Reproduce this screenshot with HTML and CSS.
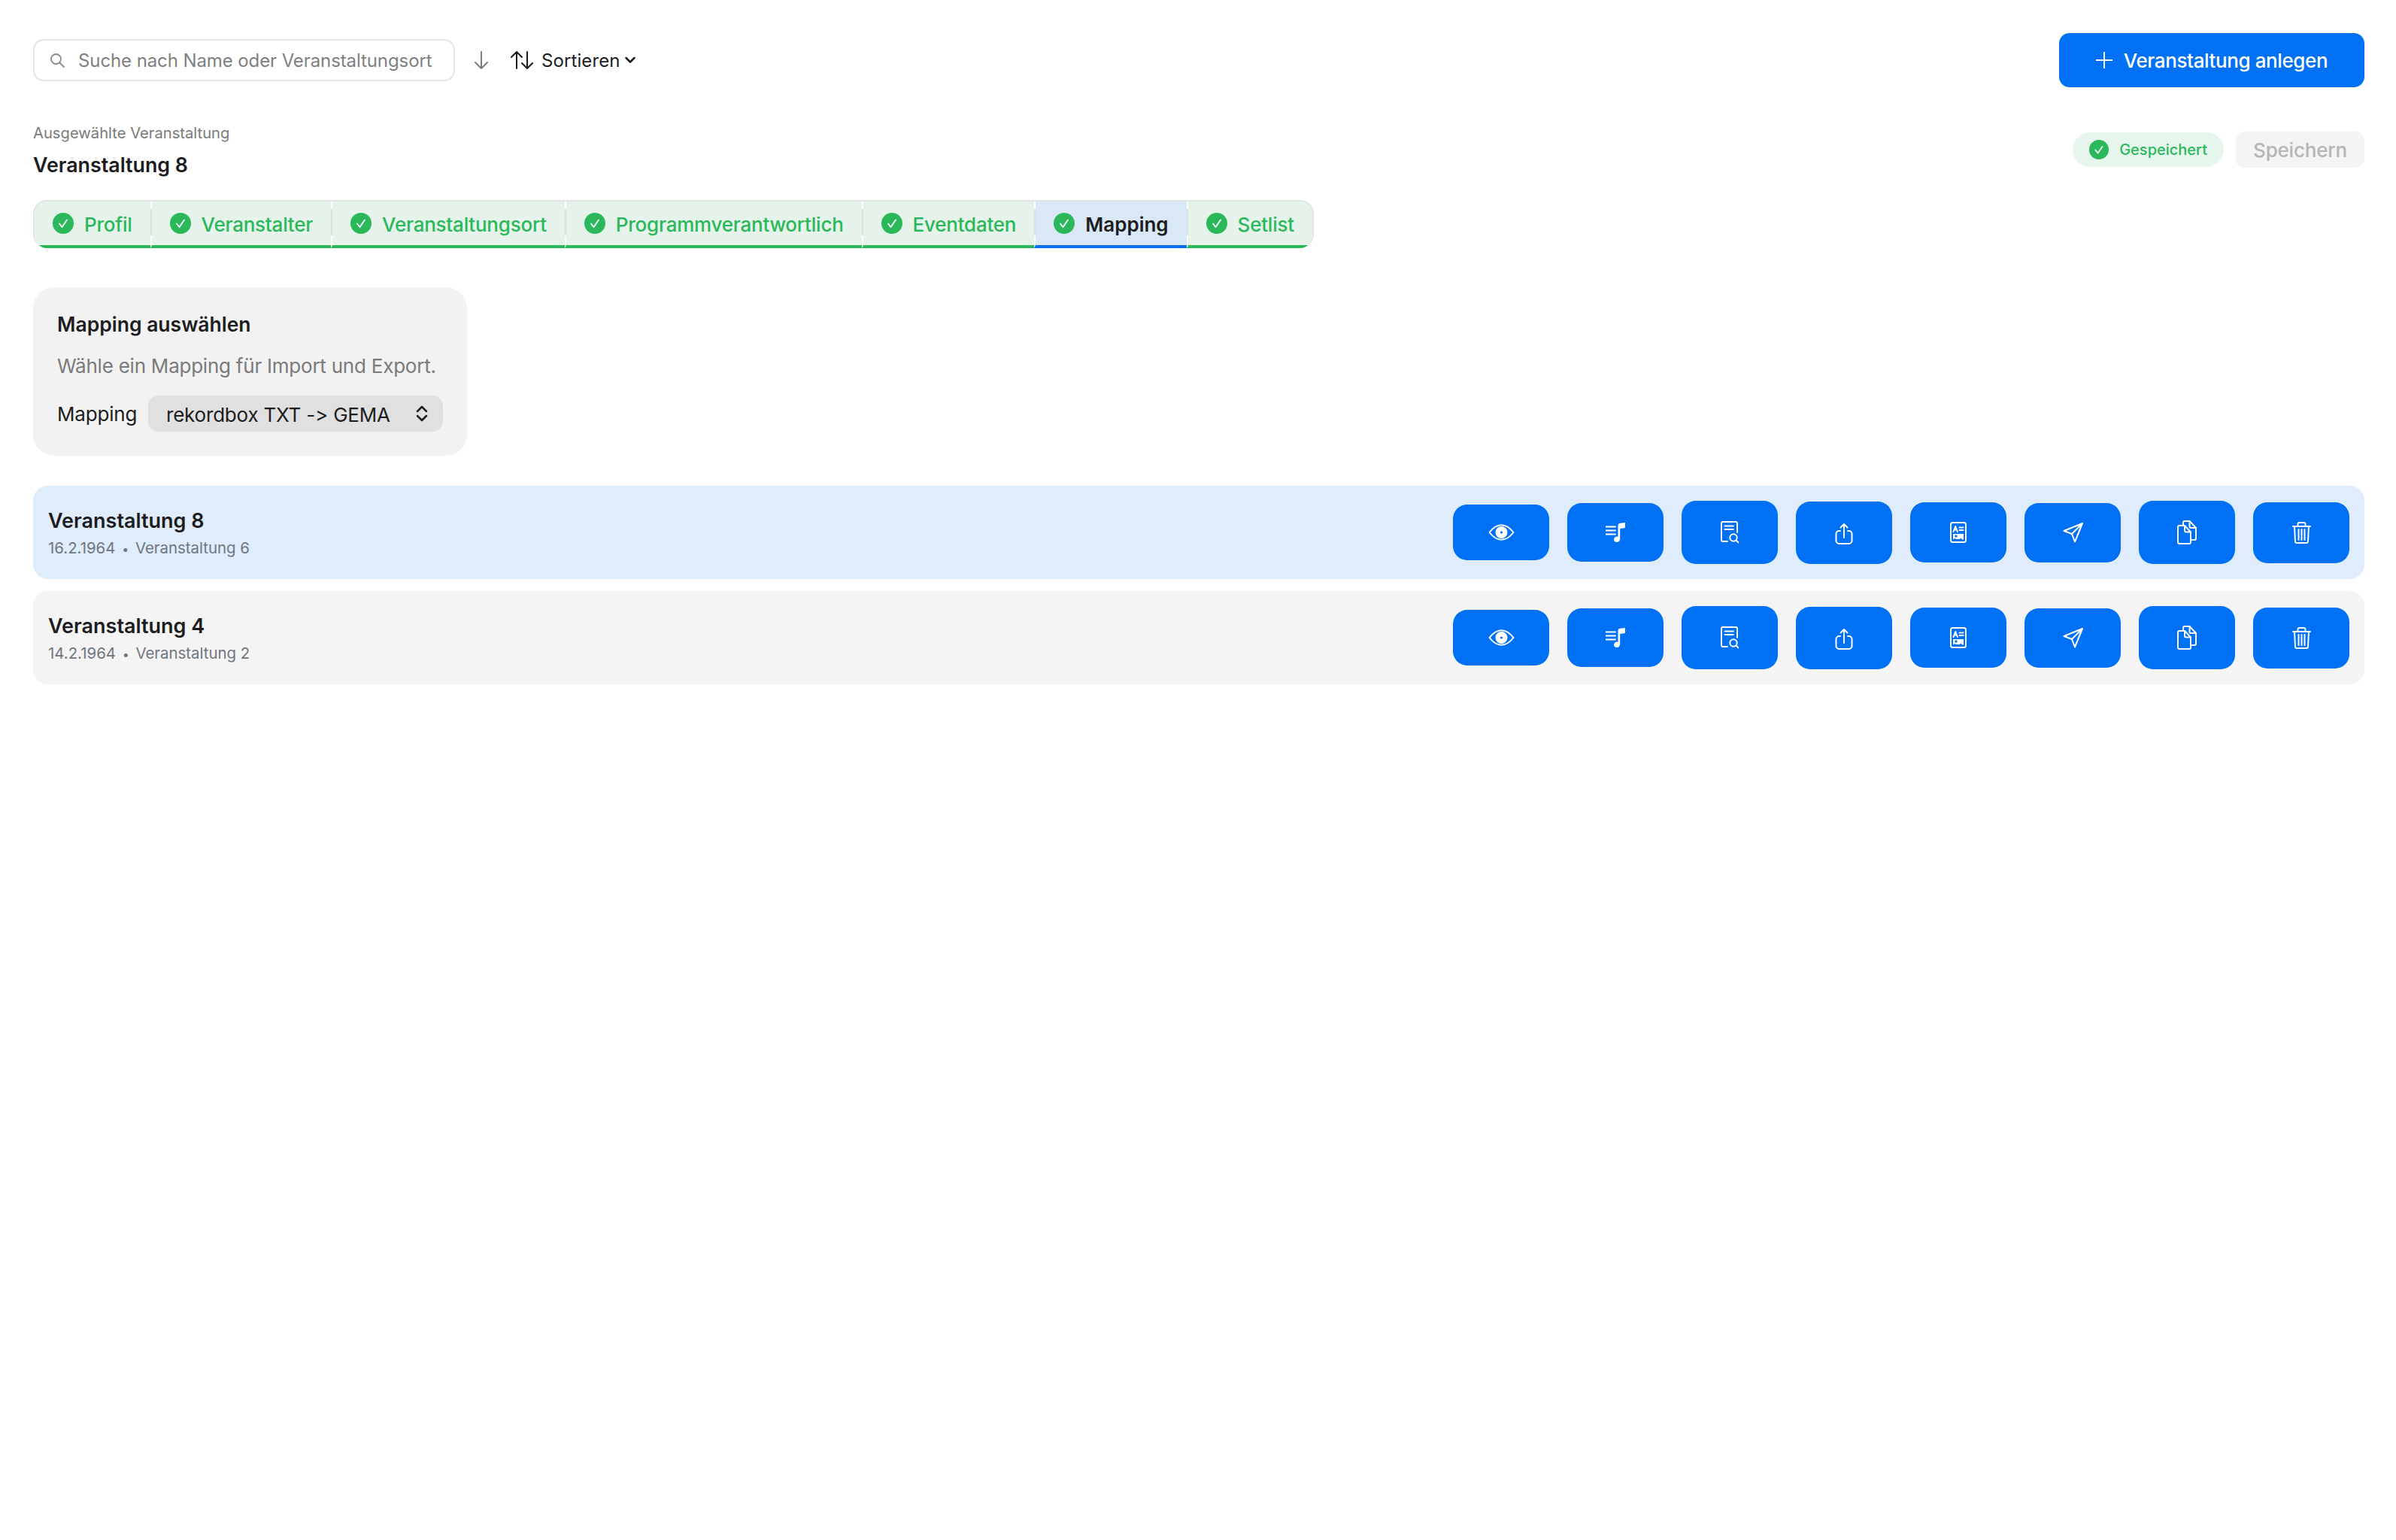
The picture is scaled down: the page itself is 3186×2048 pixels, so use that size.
FILE: index.html
```html
<!DOCTYPE html>
<html lang="de">
<head>
<meta charset="utf-8">
<title>Veranstaltungen</title>
<link rel="stylesheet" href="styles.css">
</head>
<body>
<svg class="defs" width="0" height="0" aria-hidden="true">
  <symbol id="check" viewBox="0 0 28 28"><circle cx="14" cy="14" r="14" fill="#2ab85b"/><path d="M9 14.500l3.500 4.500L19 9.500" fill="none" stroke="#fff" stroke-width="1.800" stroke-linecap="round" stroke-linejoin="round"/></symbol>
</svg>
<main class="page">
  <header class="toolbar">
    <label class="search">
      <svg class="search-icon" viewBox="0 0 20 20"><circle cx="8.500" cy="8.500" r="6.500"/><path d="M13.500 13.500L19 19"/></svg>
      <input class="search-input" type="text" placeholder="Suche nach Name oder Veranstaltungsort">
    </label>
    <button class="icon-plain" type="button" aria-label="Absteigend">
      <svg class="arrow-down" viewBox="0 0 20 24"><path d="M10 1v22M2 15l8 8 8-8"/></svg>
    </button>
    <button class="sort" type="button">
      <svg class="arrow-updown" viewBox="0 0 32 24"><path d="M9 23V1M2 8l7-7 7 7M23 1v22M16 16l7 7 7-7"/></svg>
      <span>Sortieren</span>
      <svg class="chevron" viewBox="0 0 14 10"><path d="M1.500 2l5.500 5.500L12.500 2"/></svg>
    </button>
    <button class="create" type="button">
      <svg class="plus" viewBox="0 0 22 22"><path d="M11 0v22M0 11h22"/></svg>
      <span>Veranstaltung anlegen</span>
    </button>
  </header>

  <section class="selected">
    <div>
      <p class="selected-label">Ausgewählte Veranstaltung</p>
      <h1 class="selected-title">Veranstaltung 8</h1>
    </div>
    <div class="save-group">
      <span class="saved"><svg class="saved-check"><use href="#check"/></svg>Gespeichert</span>
      <button class="save" type="button">Speichern</button>
    </div>
  </section>

  <nav class="tabs">
    <a class="tab"><svg class="tab-check"><use href="#check"/></svg>Profil</a>
    <a class="tab"><svg class="tab-check"><use href="#check"/></svg>Veranstalter</a>
    <a class="tab"><svg class="tab-check"><use href="#check"/></svg>Veranstaltungsort</a>
    <a class="tab"><svg class="tab-check"><use href="#check"/></svg>Programmverantwortlich</a>
    <a class="tab"><svg class="tab-check"><use href="#check"/></svg>Eventdaten</a>
    <a class="tab tab-active"><svg class="tab-check"><use href="#check"/></svg>Mapping</a>
    <a class="tab"><svg class="tab-check"><use href="#check"/></svg>Setlist</a>
  </nav>

  <section class="card">
    <h2 class="card-title">Mapping auswählen</h2>
    <p class="card-text">Wähle ein Mapping für Import und Export.</p>
    <div class="field">
      <span class="field-label">Mapping</span>
      <div class="select">
        <span class="select-value">rekordbox TXT -&gt; GEMA</span>
        <svg class="select-icon" viewBox="0 0 16 22"><path d="M2 8l6-6 6 6M2 14l6 6 6-6"/></svg>
      </div>
    </div>
  </section>

  <section class="list">
    <article class="row row-active">
      <div class="row-text">
        <h3 class="row-title">Veranstaltung 8</h3>
        <p class="row-sub">16.2.1964 <span class="dot">•</span> Veranstaltung 6</p>
      </div>
      <div class="actions">
        <button class="action" type="button"><svg class="i i-eye" viewBox="0 0 35 22"><path d="M1.500 11C7 4 12 1.200 17.500 1.200S28 4 33.500 11C28 18 23 20.800 17.500 20.800S7 18 1.500 11Z"/><circle class="fw" cx="17.500" cy="11" r="7"/><circle class="fb" cx="17.500" cy="11" r="2.600"/></svg></button>
        <button class="action" type="button"><svg class="i i-music" viewBox="0 0 26 26"><path d="M0 5.500h13M0 10.500h13M0 15.500h13"/><path class="fw nos" d="M16.500 4c0-2 1-3 3-3.300L26 0v7l-6.800 1V21.500c0 3-2 4.500-4.500 4.500-2 0-3.700-1.300-3.700-3.500s2-4 4.200-4c.8 0 1.800.2 1.300.5Z"/></svg></button>
        <button class="action" type="button"><svg class="i i-doc" viewBox="0 0 24 32"><g transform="translate(0 1)"><path d="M9 27H3a2 2 0 0 1-2-2V3a2 2 0 0 1 2-2h17a2 2 0 0 1 2 2v12"/><path d="M5.500 6.500h11.500M5.500 11h11.500"/><circle cx="17" cy="22" r="4.700"/><path d="M20.500 25.500l3 3"/></g></svg></button>
        <button class="action" type="button"><svg class="i i-share" viewBox="0 0 24 31"><g transform="translate(0 3)"><path d="M12 19V1M7.500 5.500L12 1l4.500 4.500"/><path d="M7 10H5.500a4 4 0 0 0-4 4v9a4 4 0 0 0 4 4h13a4 4 0 0 0 4-4v-9a4 4 0 0 0-4-4H17"/></g></svg></button>
        <button class="action" type="button"><svg class="i i-pic" viewBox="0 0 22 28"><rect x="1" y="1" width="20" height="26" rx="2.500"/><path d="M4.500 13l2.700-7 2.700 7M5.500 10.500h3.500M12.500 7.500h5M12.500 11h5"/><path class="fw nos" d="M4 16h14v7.500h-2l-1.500-2-2 1.500H8l-2-1-2 1.500Z"/><circle class="fb nos" cx="8" cy="19" r="1.700"/></svg></button>
        <button class="action" type="button"><svg class="i i-send" viewBox="0 0 27 27"><path d="M26 1L1.500 11l10.500 4 4 10.500ZM26 1L12 15"/></svg></button>
        <button class="action" type="button"><svg class="i i-copy" viewBox="0 0 26 32"><path d="M3 7h7l8 8.500V29a2 2 0 0 1-2 2H3a2 2 0 0 1-2-2V9a2 2 0 0 1 2-2Z"/><path d="M10 7v6.500a2 2 0 0 0 2 2h6"/><path d="M8 6V3a2 2 0 0 1 2-2h6.500L25 10v14a2 2 0 0 1-2 2h-5"/><path d="M16.500 1v7a2 2 0 0 0 2 2H25"/></svg></button>
        <button class="action" type="button"><svg class="i i-trash" viewBox="0 0 25 29"><path d="M1 6h23M7.500 6V3a2 2 0 0 1 2-2h6a2 2 0 0 1 2 2v3M3 6l1 20a2 2 0 0 0 2 2h13a2 2 0 0 0 2-2l1-20M8.500 10v14M12.500 10v14M16.500 10v14"/></svg></button>
      </div>
    </article>
    <article class="row">
      <div class="row-text">
        <h3 class="row-title">Veranstaltung 4</h3>
        <p class="row-sub">14.2.1964 <span class="dot">•</span> Veranstaltung 2</p>
      </div>
      <div class="actions">
        <button class="action" type="button"><svg class="i i-eye" viewBox="0 0 35 22"><path d="M1.500 11C7 4 12 1.200 17.500 1.200S28 4 33.500 11C28 18 23 20.800 17.500 20.800S7 18 1.500 11Z"/><circle class="fw" cx="17.500" cy="11" r="7"/><circle class="fb" cx="17.500" cy="11" r="2.600"/></svg></button>
        <button class="action" type="button"><svg class="i i-music" viewBox="0 0 26 26"><path d="M0 5.500h13M0 10.500h13M0 15.500h13"/><path class="fw nos" d="M16.500 4c0-2 1-3 3-3.300L26 0v7l-6.800 1V21.500c0 3-2 4.500-4.500 4.500-2 0-3.700-1.300-3.700-3.500s2-4 4.200-4c.8 0 1.800.2 1.300.5Z"/></svg></button>
        <button class="action" type="button"><svg class="i i-doc" viewBox="0 0 24 32"><g transform="translate(0 1)"><path d="M9 27H3a2 2 0 0 1-2-2V3a2 2 0 0 1 2-2h17a2 2 0 0 1 2 2v12"/><path d="M5.500 6.500h11.500M5.500 11h11.500"/><circle cx="17" cy="22" r="4.700"/><path d="M20.500 25.500l3 3"/></g></svg></button>
        <button class="action" type="button"><svg class="i i-share" viewBox="0 0 24 31"><g transform="translate(0 3)"><path d="M12 19V1M7.500 5.500L12 1l4.500 4.500"/><path d="M7 10H5.500a4 4 0 0 0-4 4v9a4 4 0 0 0 4 4h13a4 4 0 0 0 4-4v-9a4 4 0 0 0-4-4H17"/></g></svg></button>
        <button class="action" type="button"><svg class="i i-pic" viewBox="0 0 22 28"><rect x="1" y="1" width="20" height="26" rx="2.500"/><path d="M4.500 13l2.700-7 2.700 7M5.500 10.500h3.500M12.500 7.500h5M12.500 11h5"/><path class="fw nos" d="M4 16h14v7.500h-2l-1.500-2-2 1.500H8l-2-1-2 1.500Z"/><circle class="fb nos" cx="8" cy="19" r="1.700"/></svg></button>
        <button class="action" type="button"><svg class="i i-send" viewBox="0 0 27 27"><path d="M26 1L1.500 11l10.500 4 4 10.500ZM26 1L12 15"/></svg></button>
        <button class="action" type="button"><svg class="i i-copy" viewBox="0 0 26 32"><path d="M3 7h7l8 8.500V29a2 2 0 0 1-2 2H3a2 2 0 0 1-2-2V9a2 2 0 0 1 2-2Z"/><path d="M10 7v6.500a2 2 0 0 0 2 2h6"/><path d="M8 6V3a2 2 0 0 1 2-2h6.500L25 10v14a2 2 0 0 1-2 2h-5"/><path d="M16.500 1v7a2 2 0 0 0 2 2H25"/></svg></button>
        <button class="action" type="button"><svg class="i i-trash" viewBox="0 0 25 29"><path d="M1 6h23M7.500 6V3a2 2 0 0 1 2-2h6a2 2 0 0 1 2 2v3M3 6l1 20a2 2 0 0 0 2 2h13a2 2 0 0 0 2-2l1-20M8.500 10v14M12.500 10v14M16.500 10v14"/></svg></button>
      </div>
    </article>
  </section>
</main>
</body>
</html>
```

FILE: styles.css
```css
* { box-sizing: border-box; }
html, body { margin: 0; padding: 0; background: #fff; }
body { font-family: Inter, "Liberation Sans", sans-serif; font-size: 26px; color: #1d1d1f; font-variant-ligatures: none; font-feature-settings: "calt" 0; }
h1, h2, h3, p { margin: 0; }
button { font: inherit; color: inherit; border: 0; background: none; padding: 0; cursor: pointer; }
svg { display: block; flex: none; }
.defs { position: absolute; }

.page { padding: 44px 42px 0 44px; }

.toolbar { display: flex; align-items: center; height: 72px; }
.search { display: flex; align-items: center; width: 561px; height: 56px; border: 2px solid #e4e4e4; border-radius: 14px; padding-left: 20px; background: #fff; }
.search-icon { width: 20px; height: 20px; fill: none; stroke: #8a8a8a; stroke-width: 1.800; stroke-linecap: round; }
.search-input { flex: 1; min-width: 0; margin-left: 18px; border: 0; outline: 0; padding: 0; background: none; font: inherit; font-size: 24px; letter-spacing: -0.1px; color: #1d1d1f; }
.search-input::placeholder { color: #7f7f7f; opacity: 1; }
.icon-plain { margin-left: 25px; }
.arrow-down { width: 20px; height: 24px; fill: none; stroke: #7d7d7d; stroke-width: 2; stroke-linecap: round; stroke-linejoin: round; }
.sort { display: flex; align-items: center; margin-left: 28px; }
.arrow-updown { width: 32px; height: 24px; fill: none; stroke: #1d1d1f; stroke-width: 2; stroke-linecap: round; stroke-linejoin: round; }
.sort span { margin-left: 10px; font-size: 24px; font-weight: 400; letter-spacing: 0.1px; }
.chevron { width: 14px; height: 10px; margin-left: 6px; fill: none; stroke: #1d1d1f; stroke-width: 2.500; stroke-linecap: round; stroke-linejoin: round; }
.create { display: flex; align-items: center; justify-content: center; margin-left: auto; width: 406px; height: 72px; border-radius: 14px; background: #0071f5; color: #fff; font-weight: 500; letter-spacing: -0.4px; }
.plus { width: 22px; height: 22px; margin-right: 15px; fill: none; stroke: #fff; stroke-width: 2; }

.selected { display: flex; justify-content: space-between; align-items: flex-start; margin-top: 47px; }
.selected-label { font-size: 20.2px; line-height: 28px; color: #7b7b7b; }
.selected-title { margin-top: 10px; font-size: 26.800px; line-height: 36px; font-weight: 600; }
.save-group { display: flex; align-items: center; gap: 16px; margin-top: 12px; }
.saved { display: flex; align-items: center; height: 46px; padding: 0 22px; border-radius: 23px; background: #e7f6ec; color: #2ab85b; font-size: 20px; font-weight: 500; }
.saved-check { width: 26px; height: 26px; margin-right: 14px; }
.save { width: 171px; height: 48px; border-radius: 12px; background: #f4f4f4; color: #b5b5b5; font-weight: 500; letter-spacing: -0.2px; }

.tabs { display: inline-flex; margin-top: 29px; height: 64px; border: 2px solid #dfe6e2; border-bottom: 0; border-radius: 18px; overflow: hidden; vertical-align: top; }
.tab { position: relative; display: flex; align-items: center; padding: 2px 24px 0; background: #e6f3ea; border-bottom: 4px solid #2ab85b; color: #2ab85b; font-weight: 500; letter-spacing: -0.23px; white-space: nowrap; }
.tab + .tab { border-left: 2px solid #fff; }
.tab + .tab::before { content: ""; position: absolute; left: -2px; top: 10px; bottom: 13px; width: 2px; background: #dde2df; }
.tab-check { width: 28px; height: 28px; margin-right: 14px; margin-top: -2px; }
.tab-active { background: #d9e7f7; border-bottom-color: #0071f5; color: #1d1d1f; font-weight: 600; letter-spacing: 0; }

.card { width: 577px; height: 224px; margin-top: 52px; padding: 32px; border-radius: 28px; background: #f2f2f2; }
.card-title { font-size: 26.5px; line-height: 34px; font-weight: 600; }
.card-text { margin-top: 22px; line-height: 34px; color: #7a7a7a; letter-spacing: -0.23px; }
.field { display: flex; align-items: center; margin-top: 22px; }
.field-label { width: 121px; letter-spacing: -0.2px; }
.select { display: flex; align-items: center; justify-content: space-between; width: 392px; height: 48px; padding: 0 20px 0 24px; border-radius: 14px; background: #e0e0e0; }
.select-value { padding-top: 2px; letter-spacing: -0.2px; }
.select-icon { width: 16px; height: 22px; fill: none; stroke: #1d1d1f; stroke-width: 2.500; stroke-linecap: round; stroke-linejoin: round; }

.list { display: flex; flex-direction: column; gap: 16px; margin-top: 40px; }
.row { display: flex; align-items: center; justify-content: space-between; height: 124px; padding: 0 20px; border-radius: 20px; background: #f4f4f4; }
.row-active { background: #dfecfc; }
.row-text { padding-top: 3px; }
.row-title { font-size: 27px; line-height: 34px; font-weight: 600; }
.row-sub { margin-top: 5px; font-size: 20.4px; line-height: 28px; color: #6f7680; }
.dot { margin: 0 3px; font-size: 16px; }

.actions { display: flex; align-items: center; gap: 24px; }
.action { display: flex; align-items: center; justify-content: center; width: 128px; padding: 26px 0; border-radius: 19px; background: #0071f5; }
.i { fill: none; stroke: #fff; stroke-width: 2; stroke-linecap: round; stroke-linejoin: round; }
.i .fw { fill: #fff; }
.i .fb { fill: #0071f5; }
.i .nos { stroke: none; }
.i-eye { width: 35px; height: 22px; }
.i-music { width: 26px; height: 26px; }
.i-doc { width: 24px; height: 32px; }
.i-share { width: 24px; height: 31px; }
.i-pic { width: 22px; height: 28px; }
.i-send { width: 27px; height: 27px; }
.i-copy { width: 26px; height: 32px; }
.i-trash { width: 25px; height: 29px; }
```
